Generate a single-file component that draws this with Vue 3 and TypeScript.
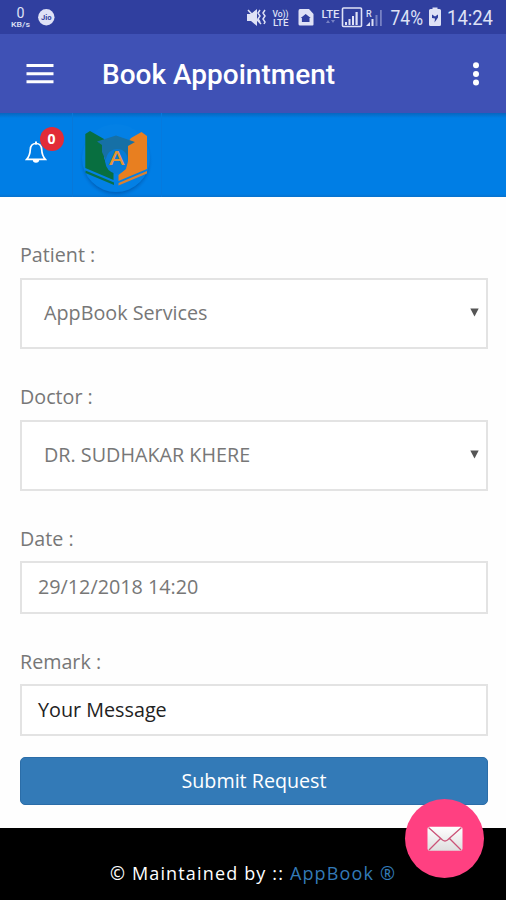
<script setup lang="ts">
import { ref } from 'vue'

interface Field {
  id: string
  label: string
  value: string
  kind: 'select' | 'input'
  dark?: boolean
}

const fields = ref<Field[]>([
  { id: 'patient', label: 'Patient :', value: 'AppBook Services', kind: 'select' },
  { id: 'doctor', label: 'Doctor :', value: 'DR. SUDHAKAR KHERE', kind: 'select' },
  { id: 'date', label: 'Date :', value: '29/12/2018 14:20', kind: 'input' },
  { id: 'remark', label: 'Remark :', value: 'Your Message', kind: 'input', dark: true },
])
const notifications = ref(0)
</script>

<template>
  <div class="screen">
    <div class="status">
      <svg class="status-left" width="60" height="34" viewBox="0 0 60 34">
        <text x="16.5" y="18" font-size="14" textLength="8" lengthAdjust="spacingAndGlyphs">0</text>
        <text x="11" y="26.5" font-size="7" font-weight="500" textLength="19" lengthAdjust="spacingAndGlyphs">KB/s</text>
        <circle cx="46.3" cy="17.2" r="8.2" />
        <text class="cut" x="41" y="20" font-size="8" font-weight="700" textLength="10.5" lengthAdjust="spacingAndGlyphs">Jio</text>
      </svg>
      <svg class="status-right" width="271" height="34" viewBox="235 0 271 34">
        <!-- muted, vibrating -->
        <path d="M247 14h4l6-5v17l-6-5h-4z" />
        <path class="line" d="M248 10l13 14" stroke-width="1.5" />
        <path class="line" d="M260 10l-2 3 2 3-2 3 2 3M265 10l-2 3 2 3-2 3 2 3-1 2" stroke-width="1.5" />
        <text x="272.5" y="17" font-size="9" font-weight="500" textLength="16" lengthAdjust="spacingAndGlyphs">Vo))</text>
        <text x="273" y="26" font-size="9" font-weight="500" textLength="15.5" lengthAdjust="spacingAndGlyphs">LTE</text>
        <!-- sim notification -->
        <path d="M300 9h9l4.500 5v10.500q0 1-1 1h-12.500q-1.500 0-1.500-1.500v-13q0-2 1.500-2z" />
        <path class="cut" d="M305.700 14l5 4h-1.200v4h-7.600v-4h-1.200z" />
        <text x="321.500" y="17.500" font-size="10.500" font-weight="500" textLength="18" lengthAdjust="spacingAndGlyphs">LTE</text>
        <path class="dim" d="M326 23l2-3 2 3zM331 20h4l-2 3z" />
        <rect class="line" x="342.500" y="8" width="19" height="18.500" rx="1" stroke-width="1.600" />
        <path d="M345 25v-3h2v3zM348.500 25v-6h2v6zM352 25v-9h2v9zM355.500 25v-13h2.200v13z" />
        <text x="366" y="17" font-size="9" font-weight="500">R</text>
        <path d="M366 26l4-4v4zM371.500 26v-7h2v7z" />
        <path class="dim" d="M375.500 26v-11h2v11zM380 26v-16h1.800v16z" />
        <text x="390.500" y="25" font-size="19.500" textLength="32.500" lengthAdjust="spacingAndGlyphs">74%</text>
        <path d="M432.500 9v-1.500h5v1.500h2q1.500 0 1.500 1.500v14q0 1.500-1.500 1.500h-9q-1.500 0-1.500-1.500v-14q0-1.500 1.500-1.500z" />
        <path class="cut" d="M432 14.500l3 2 3-2v3l-3.500 5 .5-4-3-.5z" />
        <text x="447" y="25" font-size="19.500" textLength="46" lengthAdjust="spacingAndGlyphs">14:24</text>
      </svg>
    </div>

    <header class="appbar">
      <button class="plain menu" aria-label="Menu">
        <svg width="28" height="22" viewBox="0 0 28 22"><path d="M0.500 1h27v3h-27zM0.500 9.300h27v3h-27zM0.500 17.300h27v3h-27z" /></svg>
      </button>
      <h1>Book Appointment</h1>
      <button class="plain more" aria-label="More">
        <svg width="8" height="24" viewBox="0 0 8 24"><circle cx="4" cy="3.200" r="3" /><circle cx="4" cy="12" r="3" /><circle cx="4" cy="20.500" r="3" /></svg>
      </button>
    </header>

    <nav class="brandbar">
      <div class="bell-cell">
        <svg class="bell" width="22" height="23" viewBox="0 0 22 23">
          <path class="outline" d="M11 2.500C7.300 2.500 5.500 5.200 5.300 8.500C5.100 13 4 15.700 1.700 18.300H20.300C18 15.700 16.900 13 16.700 8.500C16.500 5.200 14.700 2.500 11 2.500Z" />
          <path d="M10 0.500h2v3h-2zM7.800 18.500h6.400a3.200 3.200 0 0 1-6.400 0z" />
        </svg>
        <span class="badge">{{ notifications }}</span>
      </div>
      <div class="logo-cell">
        <svg class="logo" width="88" height="84" viewBox="73 113 88 84">
          <defs>
            <radialGradient id="disc">
              <stop offset="0.860" stop-color="#0059ae" stop-opacity="0.650" />
              <stop offset="1" stop-color="#0078df" stop-opacity="0" />
            </radialGradient>
          </defs>
          <circle cx="116" cy="161" r="37" fill="url(#disc)" />
          <circle cx="116" cy="158" r="34" fill="#0380e5" />
          <path fill="#086f40" d="M90 131L85.300 134V168L113.500 180V173L108 168L104 158V139Z" />
          <path fill="#e87f20" d="M141.500 132L147 136V169L118.500 181V175L126 169L128 160V142L131 138Z" />
          <path d="M85.500 170.500V173L114 185V182.500Z" fill="#087048" />
          <path d="M147 171V173.500L118.500 185.500V183Z" fill="#d98032" />
          <path fill="#087bd5" d="M105 148H128V160Q127 172 116.500 174Q106 172 105 161Z" />
          <path fill="#1670a6" d="M97 141.500L116 135.500L135 142L128 146V161Q127 149 117 149Q108 149 105.500 160L102 152V145Z" />
          <text class="letter" x="109" y="165.300" textLength="15.500" lengthAdjust="spacingAndGlyphs">A</text>
        </svg>
      </div>
    </nav>

    <main class="form">
      <div v-for="f in fields" :key="f.id" class="field" :class="f.kind">
        <span class="label">{{ f.label }}</span>
        <div class="control" :class="{ dark: f.dark }">
          <span class="value">{{ f.value }}</span>
          <svg v-if="f.kind === 'select'" width="9" height="9" viewBox="0 0 9 9"><path d="M0.300 0.500h8.400l-4.200 8z" /></svg>
        </div>
      </div>
      <button class="submit">Submit Request</button>
    </main>

    <footer class="footer">
      <span>© Maintained by :: <a>AppBook ®</a></span>
    </footer>

    <button class="fab" aria-label="Send message">
      <svg width="36" height="26" viewBox="0 0 36 26">
        <defs>
          <linearGradient id="paper" x1="0" y1="0" x2="0" y2="1">
            <stop offset="0" stop-color="#ffffff" />
            <stop offset="1" stop-color="#dedede" />
          </linearGradient>
        </defs>
        <rect x="0.500" y="0.800" width="35" height="24" rx="2" fill="url(#paper)" />
        <path d="M1.500 1.500L15.500 14Q18 16 20.500 14L34.500 1.500M2 24L13.500 12.500M34 24L22.500 12.500" fill="none" stroke="#cb5277" stroke-width="1.300" />
      </svg>
    </button>
  </div>
</template>

<style>
body {
  margin: 0;
}
</style>

<style scoped>
.screen {
  position: relative;
  display: flex;
  flex-direction: column;
  width: 506px;
  height: 900px;
  overflow: hidden;
  background: #fefefe;
  font-family: "Open Sans", "Noto Sans", sans-serif;
}
.status {
  display: flex;
  justify-content: space-between;
  height: 34px;
  background: #303f9f;
}
.status svg {
  fill: #dfe2f6;
  font-family: Roboto, sans-serif;
}
.status .line {
  fill: none;
  stroke: #dfe2f6;
}
.status .cut {
  fill: #303f9f;
}
.status .dim {
  fill: #7781c4;
}
.appbar {
  display: flex;
  align-items: center;
  box-sizing: border-box;
  height: 79px;
  padding: 0 26px;
  background: #3f51b5;
  color: #fff;
}
.plain {
  display: flex;
  padding: 0;
  border: 0;
  background: none;
}
.plain svg {
  fill: #fff;
}
h1 {
  flex: 1;
  margin: 3px 0 0 48px;
  font: 500 28px/34px Roboto, sans-serif;
}
.brandbar {
  display: flex;
  box-sizing: border-box;
  height: 84px;
  background: linear-gradient(#0866bf, #007ee5 5px, #007ee5 81px, #0872cd);
}
.bell-cell {
  position: relative;
  box-sizing: border-box;
  width: 73px;
  padding: 28px 0 0 25px;
  border-right: 1px solid #0878d8;
}
.bell {
  fill: #fff;
}
.bell .outline {
  fill: none;
  stroke: #fff;
  stroke-width: 1.7;
}
.badge {
  position: absolute;
  top: 14px;
  left: 39.5px;
  width: 24px;
  height: 24px;
  border-radius: 50%;
  background: #e22c38;
  color: #fff;
  font-size: 14px;
  font-weight: 700;
  line-height: 24px;
  text-align: center;
}
.logo-cell {
  width: 88px;
  border-right: 1px solid #057ade;
}
.logo {
  display: block;
}
.letter {
  fill: #e49434;
  font: 600 20px "Open Sans", sans-serif;
}
.form {
  display: flex;
  flex-direction: column;
  box-sizing: border-box;
  height: 631px;
  padding: 44px 18px 0 20px;
}
.field {
  display: flex;
  flex-direction: column;
  margin-bottom: 34px;
}
.field.input {
  margin-bottom: 34px;
}
.field.input + .field.input {
  margin-bottom: 21px;
}
.label {
  height: 28px;
  margin-bottom: 9px;
  color: #777;
  font-size: 19.7px;
  line-height: 28px;
}
.field.input .label {
  margin-bottom: 8px;
}
.control {
  display: flex;
  align-items: center;
  justify-content: space-between;
  box-sizing: border-box;
  height: 71px;
  padding: 0 7px 0 22px;
  border: 2px solid #e3e3e3;
  background: #fff;
  color: #777;
  font-size: 19.75px;
}
.control svg {
  fill: #555;
  margin-bottom: 2px;
}
.value {
  margin-bottom: 2px;
}
.field.input .control {
  height: 53px;
  padding-left: 16px;
}
.field.input + .field.input .control {
  height: 52px;
}
.control.dark {
  color: #222;
}
.submit {
  height: 48px;
  padding: 0 0 2px;
  border: 1px solid #2b6da8;
  border-radius: 5px;
  background: #337ab7;
  color: #fff;
  font: 19.7px "Open Sans", sans-serif;
}
.footer {
  display: flex;
  justify-content: center;
  box-sizing: border-box;
  height: 72px;
  padding-top: 32px;
  background: #000;
  color: #fff;
  font-size: 18px;
  font-weight: 500;
  line-height: 26px;
  letter-spacing: 1.15px;
  white-space: pre;
}
.footer a {
  color: #337ab7;
}
.fab {
  position: absolute;
  top: 799px;
  left: 405px;
  display: flex;
  align-items: center;
  justify-content: center;
  width: 79px;
  height: 79px;
  padding: 0;
  border: 0;
  border-radius: 50%;
  background: #ff4081;
}
</style>
